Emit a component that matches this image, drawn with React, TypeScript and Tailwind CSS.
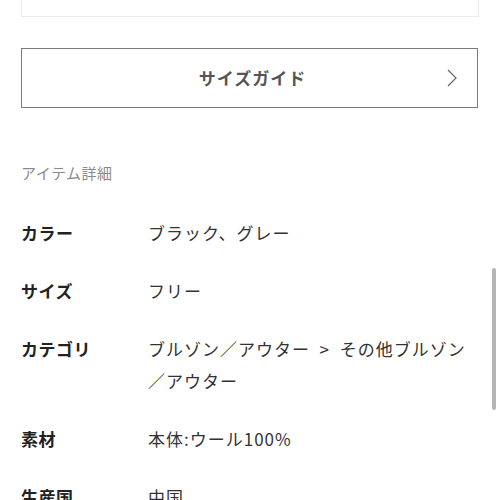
import React from "react";

const rows: { label: string; value: string[] }[] = [
  { label: "カラー", value: ["ブラック、グレー"] },
  { label: "サイズ", value: ["フリー"] },
  { label: "カテゴリ", value: ["ブルゾン／アウター  >  その他ブルゾン", "／アウター"] },
  { label: "素材", value: ["本体:ウール100%"] },
  { label: "生産国", value: ["中国"] },
];

export default function App() {
  return (
    <div
      className="relative w-[500px] h-[500px] overflow-hidden bg-white"
      style={{ fontFamily: '"Noto Sans CJK JP", "Noto Sans", sans-serif' }}
    >
      <div className="px-[21px]">
        <div className="h-[17px] border-l border-r border-b border-[#ececec]" />
        <button className="mt-[31px] w-[457px] h-[60px] border border-[#7a7a7a] bg-white flex items-center relative">
          <span className="flex-1 text-center text-[17px] font-bold text-[#555] tracking-[1px] pl-[6px]">
            サイズガイド
          </span>
          <svg
            className="absolute right-[20px] top-1/2 -translate-y-1/2"
            width="10"
            height="18"
            viewBox="0 0 10 18"
            fill="none"
            stroke="#666"
            strokeWidth="1.2"
          >
            <path d="M1 1 L9 9 L1 17" />
          </svg>
        </button>
        <div className="mt-[53px] text-[15px] leading-[24px] text-[#8a8a8a] tracking-[0.5px]">アイテム詳細</div>
        <div className="mt-[32px] flex flex-col gap-[26px]">
          {rows.map((r) => (
            <div key={r.label} className="flex text-[17px] leading-[32px]">
              <div className="w-[127px] shrink-0 font-bold text-[#222] tracking-[0.5px]">{r.label}</div>
              <div className="text-[#333] tracking-[1px]">
                {r.value.map((v, i) => (
                  <div key={i} className="whitespace-pre">{v}</div>
                ))}
              </div>
            </div>
          ))}
        </div>
      </div>
      <div className="absolute left-[492px] top-[268px] w-[4px] h-[142px] rounded-full bg-[#b5b5b5]" />
    </div>
  );
}
